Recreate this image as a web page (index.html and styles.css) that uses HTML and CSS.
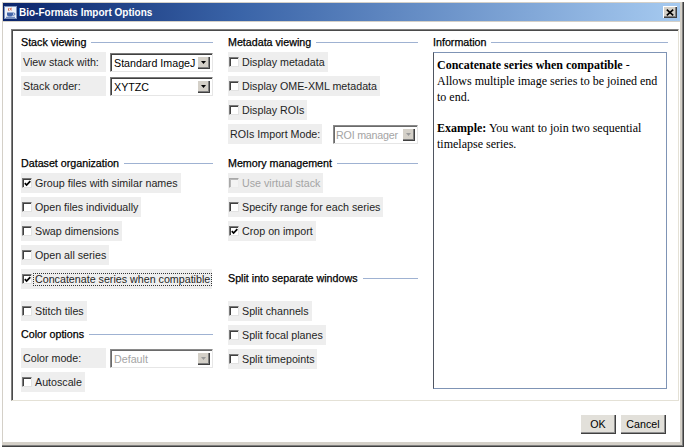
FILE: index.html
```html
<!DOCTYPE html>
<html>
<head>
<meta charset="utf-8">
<title>Bio-Formats Import Options</title>
<link rel="stylesheet" href="styles.css">
</head>
<body>
<div class="window">
  <div class="titlebar">
    <svg class="app-icon" width="13" height="13" viewBox="0 0 13 13">
      <rect x="0.5" y="0.5" width="12" height="12" fill="#eef2f8" stroke="#7d93bd"/>
      <path d="M5 2.2q-1 1.3 0 2.6M7.2 1.8q-1 1.3 0 2.6" fill="none" stroke="#d0451f" stroke-width="1"/>
      <path d="M3 6.5h6v2a2 2 0 0 1-2 2h-2a2 2 0 0 1-2-2z" fill="#4466aa"/>
      <path d="M9 7h0.8a1 1 0 0 1 0 2.2H9" fill="none" stroke="#4466aa" stroke-width="0.9"/>
      <path d="M2 11.3h9" stroke="#4466aa" stroke-width="0.9"/>
    </svg>
    <span class="title">Bio-Formats Import Options</span>
    <span class="close-btn"><svg width="8" height="7" viewBox="0 0 8 7"><path d="M0.8 0.6L7.2 6.4M7.2 0.6L0.8 6.4" stroke="#000" stroke-width="1.6"/></svg></span>
  </div>
  <div class="client">
    <div class="panel">
      <div class="col col-left">
        <div class="hdr mt-1"><span class="hdr-text">Stack viewing</span><span class="hdr-line"></span></div>
        <div class="item field-row"><span class="field-label">View stack with:</span><span class="combo combo-left"><span class="combo-text">Standard ImageJ</span><span class="combo-arrow"><svg width="5" height="3" viewBox="0 0 5 3"><path d="M0 0h5L2.5 3z"/></svg></span></span></div>
        <div class="item field-row"><span class="field-label">Stack order:</span><span class="combo combo-left"><span class="combo-text">XYTZC</span><span class="combo-arrow"><svg width="5" height="3" viewBox="0 0 5 3"><path d="M0 0h5L2.5 3z"/></svg></span></span></div>

        <div class="hdr mt-57"><span class="hdr-text">Dataset organization</span><span class="hdr-line"></span></div>
        <div class="item row"><span class="cb"><svg width="7" height="7" viewBox="0 0 7 7"><path d="M0.8 3.2L2.6 5.1L6.3 1.2" fill="none" stroke="#000" stroke-width="1.7"/></svg></span><span>Group files with similar names</span></div>
        <div class="item row"><span class="cb"></span><span>Open files individually</span></div>
        <div class="item row"><span class="cb"></span><span>Swap dimensions</span></div>
        <div class="item row"><span class="cb"></span><span>Open all series</span></div>
        <div class="item row row-focus"><span class="cb"><svg width="7" height="7" viewBox="0 0 7 7"><path d="M0.8 3.2L2.6 5.1L6.3 1.2" fill="none" stroke="#000" stroke-width="1.7"/></svg></span><span class="focus-text">Concatenate series when compatible</span></div>
        <div class="item row mt-12"><span class="cb"></span><span>Stitch tiles</span></div>

        <div class="hdr mt-3"><span class="hdr-text">Color options</span><span class="hdr-line"></span></div>
        <div class="item field-row mt-4"><span class="field-label">Color mode:</span><span class="combo combo-left disabled"><span class="combo-text">Default</span><span class="combo-arrow"><svg width="5" height="3" viewBox="0 0 5 3"><path d="M0 0h5L2.5 3z"/></svg></span></span></div>
        <div class="item row"><span class="cb"></span><span>Autoscale</span></div>
      </div>

      <div class="col col-mid">
        <div class="hdr mt-1"><span class="hdr-text">Metadata viewing</span><span class="hdr-line"></span></div>
        <div class="item row"><span class="cb"></span><span>Display metadata</span></div>
        <div class="item row"><span class="cb"></span><span>Display OME-XML metadata</span></div>
        <div class="item row"><span class="cb"></span><span>Display ROIs</span></div>
        <div class="item field-row"><span class="field-label field-label-wide">ROIs Import Mode:</span><span class="combo combo-mid disabled"><span class="combo-text">ROI manager</span><span class="combo-arrow"><svg width="5" height="3" viewBox="0 0 5 3"><path d="M0 0h5L2.5 3z"/></svg></span></span></div>

        <div class="hdr mt-9"><span class="hdr-text">Memory management</span><span class="hdr-line"></span></div>
        <div class="item row disabled"><span class="cb"></span><span>Use virtual stack</span></div>
        <div class="item row"><span class="cb"></span><span>Specify range for each series</span></div>
        <div class="item row"><span class="cb"><svg width="7" height="7" viewBox="0 0 7 7"><path d="M0.8 3.2L2.6 5.1L6.3 1.2" fill="none" stroke="#000" stroke-width="1.7"/></svg></span><span>Crop on import</span></div>

        <div class="hdr mt-27"><span class="hdr-text">Split into separate windows</span><span class="hdr-line"></span></div>
        <div class="item row mt-13"><span class="cb"></span><span>Split channels</span></div>
        <div class="item row"><span class="cb"></span><span>Split focal planes</span></div>
        <div class="item row"><span class="cb"></span><span>Split timepoints</span></div>
      </div>

      <div class="col col-info">
        <div class="hdr mt-1"><span class="hdr-text">Information</span><span class="hdr-line"></span></div>
        <div class="info-box">
          <p><b>Concatenate series when compatible</b> -<br>Allows multiple image series to be joined end<br>to end.</p>
          <p class="info-p2"><b>Example:</b> You want to join two sequential<br>timelapse series.</p>
        </div>
      </div>
    </div>
    <div class="buttons">
      <span class="btn btn-ok">OK</span>
      <span class="btn btn-cancel">Cancel</span>
    </div>
  </div>
</div>
</body>
</html>
```

FILE: styles.css
```css
* { box-sizing: border-box; }
html, body { margin: 0; padding: 0; }
body {
  width: 684px;
  height: 447px;
  overflow: hidden;
  background: #d4d0c8;
  font-family: "Liberation Sans", Arial, sans-serif;
  font-size: 10.7px;
  color: #1e1e1e;
}
.window {
  width: 684px;
  height: 447px;
  display: flex;
  flex-direction: column;
  padding: 3px 4px 5px 3px;
  background: #d4d0c8;
  box-shadow: inset 2px 2px #fff, inset -1px -1px #404040, inset -2px -2px #808080;
}
.titlebar {
  flex: none;
  height: 18px;
  display: flex;
  align-items: center;
  padding: 0 3px 0 1px;
  background: linear-gradient(to right, #0a246a 0%, #3a64a8 35%, #a6caf0 100%);
  color: #fff;
}
.app-icon { flex: none; margin-right: 2px; }
.title { flex: 1; font-weight: bold; font-size: 10px; white-space: nowrap; }
.close-btn {
  width: 14px;
  height: 12px;
  display: flex;
  align-items: center;
  justify-content: center;
  background: #d4d0c8;
  box-shadow: inset 1px 1px #fff, inset -1px -1px #404040, inset -2px -2px #808080;
}
.client {
  flex: 1;
  margin-top: 1px;
  background: #fff;
  display: flex;
  flex-direction: column;
  padding: 7px 1px 0 8px;
}
.panel {
  height: 372px;
  display: flex;
  gap: 15px;
  padding: 1px 9px 0 9px;
  border: 1px solid;
  border-color: #808080 #e4e1d6 #e4e1d6 #808080;
  box-shadow: inset 1px 1px #4a4a4a;
}
.col { display: flex; flex-direction: column; align-items: flex-start; }
.col-left { width: 192px; }
.col-mid { width: 190px; }
.col-info { width: 235px; }

.hdr {
  align-self: stretch;
  height: 20px;
  display: flex;
  align-items: center;
  gap: 5px;
}
.hdr-text { color: #000; -webkit-text-stroke: 0.25px #000; white-space: nowrap; }
.hdr-line { flex: 1; height: 1px; background: #9fb2d2; }

.item + .item { margin-top: 4px; }
.row {
  height: 20px;
  display: flex;
  align-items: center;
  gap: 3px;
  padding: 0 3px 0 1px;
  background: #eeeeee;
  white-space: nowrap;
}
.cb {
  flex: none;
  width: 10px;
  height: 10px;
  display: flex;
  align-items: center;
  justify-content: center;
  background: #fff;
  border: 1px solid;
  border-color: #7a7a7a #e2e2e2 #e2e2e2 #7a7a7a;
  box-shadow: inset 1px 1px #404040;
}
.row.disabled { color: #a4a4a4; }
.row.disabled .cb {
  background: #f4f4f4;
  border-color: #a8a8a8 #ececec #ececec #a8a8a8;
  box-shadow: inset 1px 1px #b8b8b8;
}
.row-focus { padding-right: 0; gap: 1px; }
.focus-text { border: 1px dotted #333; padding: 0 1px; line-height: 11px; }

.field-row { display: flex; align-items: center; gap: 4px; height: 20px; }
.field-label {
  width: 85px;
  height: 20px;
  line-height: 20px;
  padding-left: 2px;
  background: #eeeeee;
  white-space: nowrap;
}
.field-label-wide { width: 94px; margin-right: 7px; }
.combo {
  height: 19px;
  margin-top: 1px;
  display: flex;
  align-items: center;
  padding: 2px 2px 2px 3px;
  background: #fff;
  border: 1px solid;
  border-color: #7a7a7a #e6e6e6 #e6e6e6 #7a7a7a;
  box-shadow: inset 1px 1px #404040;
  color: #000;
  white-space: nowrap;
}
.combo-left { width: 103px; }
.combo-mid { width: 85px; padding-left: 2px; }
.combo-text { flex: 1; overflow: hidden; }
.combo-mid .combo-text { letter-spacing: -0.2px; }
.combo-arrow {
  flex: none;
  width: 13px;
  height: 13px;
  display: flex;
  align-items: center;
  justify-content: center;
  background: #d4d0c8;
  box-shadow: inset 1px 1px #fff, inset -1px -1px #404040, inset -2px -2px #808080;
  fill: #000;
}
.combo.disabled { color: #a4a4a4; border-color: #8a8a8a #e6e6e6 #e6e6e6 #8a8a8a; box-shadow: inset 1px 1px #6a6a6a; }
.combo.disabled .combo-arrow { fill: #9a9a9a; }

.mt-1 { margin-top: 1px; }
.col .mt-3 { margin-top: 3px; }
.col .mt-4 { margin-top: 4px; }
.col .mt-9 { margin-top: 9px; }
.col .mt-12 { margin-top: 12px; }
.col .mt-13 { margin-top: 13px; }
.col .mt-27 { margin-top: 27px; }
.col .mt-57 { margin-top: 57px; }

.info-box {
  width: 234px;
  height: 337px;
  border: 1px solid #7f94b5;
  border-left-color: #4f5560;
  padding: 4px 3px;
  font-family: "Liberation Serif", "Times New Roman", serif;
  font-size: 12px;
  line-height: 16px;
  color: #000;
  white-space: nowrap;
}
.info-box p { margin: 0; }
.info-box .info-p2 { margin-top: 15px; }

.buttons {
  display: flex;
  justify-content: flex-end;
  gap: 4px;
  margin-top: 13px;
  padding-right: 13px;
}
.btn {
  height: 20px;
  display: flex;
  align-items: center;
  justify-content: center;
  background: #e2e0da;
  color: #000;
  box-shadow: inset 1px 1px #fff, inset -1px -1px #404040, inset -2px -2px #909090;
}
.btn-ok { width: 36px; }
.btn-cancel { width: 46px; }
```
